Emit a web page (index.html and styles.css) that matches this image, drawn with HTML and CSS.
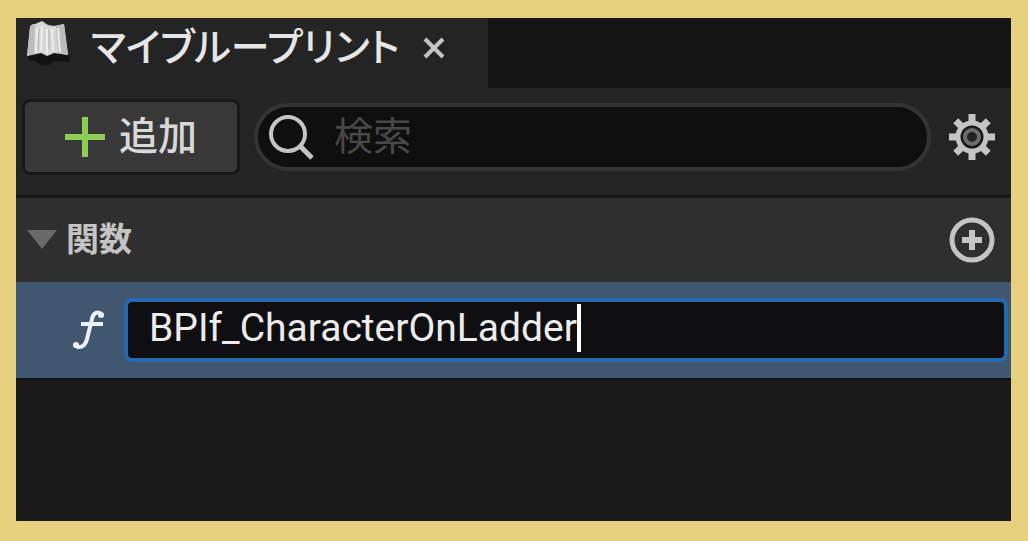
FILE: index.html
```html
<!DOCTYPE html>
<html lang="ja">
<head>
    <meta charset="utf-8">
    <title>マイブループリント</title>
    <link rel="stylesheet" href="styles.css">
</head>
<body>
<main class="panel">
    <div class="tabs">
        <div class="tab">
            <svg class="tab-icon" width="46" height="46" viewBox="0 0 46 46" aria-hidden="true">
                <path d="M4 34 L17 33 L23 36 L29 33 L44 35 L45 42 L29 41 L24 45 L16 45 L10 41 L3 40Z" fill="#121212"/>
                <path d="M5 7 Q6 4 10 4 L17 1 L23 5 L29 6 L39 4 L43 35 L29 33 L22 36 L16 33 L2 36Z" fill="#d6d6d6"/>
                <path d="M5 7 Q6 4 10 4 L9 34 L2 36Z M31 6 L39 4 L43 35 L33 33Z" fill="#bcbcbc"/>
                <path d="M12 8 L11 32 M17 5 L16 31 M22 9 V34 M27 9 L28 31 M33 8 L35 32" fill="none" stroke="#ededed" stroke-width="2"/>
                <path d="M14 9 L13 30 M24 10 V30" fill="none" stroke="#b4b4b4" stroke-width="1"/>
            </svg>
            <span class="tab-title">マイブループリント</span>
            <button class="icon-btn" type="button" aria-label="閉じる">
                <svg width="24" height="24" viewBox="0 0 24 24"><path d="M3 3 L21 21 M21 3 L3 21" stroke="#c4c4c4" stroke-width="4"/></svg>
            </button>
        </div>
    </div>

    <div class="toolbar">
        <button class="add-btn" type="button">
            <svg width="40" height="40" viewBox="0 0 40 40" aria-hidden="true"><path d="M20 0 V40 M0 20 H40" stroke="#8fce54" stroke-width="6"/></svg>
            <span>追加</span>
        </button>
        <label class="search">
            <svg width="46" height="46" viewBox="0 0 46 46" aria-hidden="true">
                <circle cx="20" cy="20" r="17" fill="none" stroke="#c4c4c4" stroke-width="4"/>
                <path d="M32 32 L44 44" stroke="#c4c4c4" stroke-width="5"/>
            </svg>
            <input class="search-input" type="search" placeholder="検索" aria-label="検索">
        </label>
        <button class="icon-btn" type="button" aria-label="設定">
            <svg width="46" height="46" viewBox="-23 -23 46 46">
                <g stroke="#c4c4c4" stroke-width="7">
                    <path d="M0 -23 V-13 M0 13 V23 M-23 0 H-13 M13 0 H23"/>
                    <path d="M0 -23 V-13 M0 13 V23 M-23 0 H-13 M13 0 H23" transform="rotate(45)"/>
                </g>
                <circle r="14" fill="#1a1a1a" stroke="#c4c4c4" stroke-width="5"/>
                <circle r="7" fill="#222" stroke="#6e6e6e" stroke-width="4"/>
            </svg>
        </button>
    </div>

    <div class="category">
        <svg width="32" height="20" viewBox="0 0 32 20" aria-hidden="true"><path d="M1 0 H31 L16 19Z" fill="#696969"/></svg>
        <h2 class="category-title">関数</h2>
        <button class="icon-btn" type="button" aria-label="関数を追加">
            <svg width="46" height="46" viewBox="0 0 46 46">
                <circle cx="23" cy="23" r="20" fill="none" stroke="#c4c4c4" stroke-width="5"/>
                <path d="M23 13 V33 M13 23 H33" stroke="#c4c4c4" stroke-width="6"/>
            </svg>
        </button>
    </div>

    <div class="function-row">
        <svg width="34" height="40" viewBox="0 0 34 40" aria-hidden="true">
            <path d="M30 5 C26 0 21 3 20 9 L15 29 C13 37 7 39 3 35" fill="none" stroke="#eaf2fb" stroke-width="4" stroke-linecap="round"/>
            <path d="M9 14 H31" stroke="#eaf2fb" stroke-width="4"/>
            <circle cx="29" cy="5" r="3" fill="#eaf2fb"/>
            <circle cx="4" cy="35" r="3" fill="#eaf2fb"/>
        </svg>
        <div class="name-box">
            <input class="name-input" type="text" value="BPIf_CharacterOnLadder" aria-label="関数名" spellcheck="false">
            <span class="caret"></span>
        </div>
    </div>
</main>
</body>
</html>
```
FILE: styles.css
```css
* {
    box-sizing: border-box;
}

body {
    margin: 0;
    min-height: 100vh;
    display: flex;
    padding: 18px 17px 20px 16px;
    background: #e7d07e;
    color: #d8d8d8;
    font-family: Roboto, "Noto Sans CJK JP", sans-serif;
    font-size: 39px;
    line-height: 48px;
}

button,
input {
    font: inherit;
    color: inherit;
    border: 0;
    padding: 0;
    background: none;
}

input {
    outline: none;
}

svg {
    display: block;
    flex: none;
}

.panel {
    flex: 1;
    min-width: 0;
    background: #1a1a1a;
}

.tabs {
    display: flex;
    background: #141414;
}

.tab {
    display: flex;
    align-items: center;
    height: 70px;
    padding: 2px 42px 12px 9px;
    background: #242424;
}

.tab-icon {
    align-self: flex-start;
}

.tab-title {
    margin: 0 22px 0 20px;
    color: #e6e6e6;
    font-weight: 500;
    font-feature-settings: "palt";
    white-space: nowrap;
}

.icon-btn {
    flex: none;
}

.toolbar {
    display: flex;
    align-items: center;
    gap: 14px;
    height: 110px;
    padding: 0 16px 10px 6px;
    background: #242424;
    border-bottom: 3px solid #141414;
}

.add-btn {
    display: flex;
    align-items: center;
    justify-content: center;
    gap: 14px;
    width: 218px;
    height: 76px;
    background: #383838;
    border: 3px solid #181818;
    border-radius: 8px;
    font-weight: 500;
}

.search {
    flex: 1;
    min-width: 0;
    display: flex;
    align-items: center;
    gap: 20px;
    height: 68px;
    margin-right: 4px;
    padding: 0 10px;
    background: #0f0f0f;
    border: 4px solid #333;
    border-radius: 34px;
}

.search-input {
    flex: 1;
    min-width: 0;
}

.search-input::placeholder {
    color: #484848;
}

.category {
    display: flex;
    align-items: center;
    height: 84px;
    padding: 0 16px 0 10px;
    background: #2f2f2f;
}

.category-title {
    flex: 1;
    margin: 0 8px;
    color: #c4c4c4;
    font-size: 33px;
    font-weight: 700;
}

.function-row {
    display: flex;
    align-items: center;
    gap: 18px;
    height: 98px;
    padding: 0 3px 0 56px;
    background: #41566f;
    border-bottom: 2px solid #101010;
}

.name-box {
    flex: 1;
    min-width: 0;
    display: flex;
    align-items: center;
    height: 64px;
    padding: 0 20px 4px 21px;
    background: #0f0f11;
    border: 4px solid #2468b0;
    border-radius: 8px;
}

.name-input {
    field-sizing: content;
    color: #ececec;
}

.caret {
    width: 4px;
    height: 48px;
    background: #fff;
}
```
